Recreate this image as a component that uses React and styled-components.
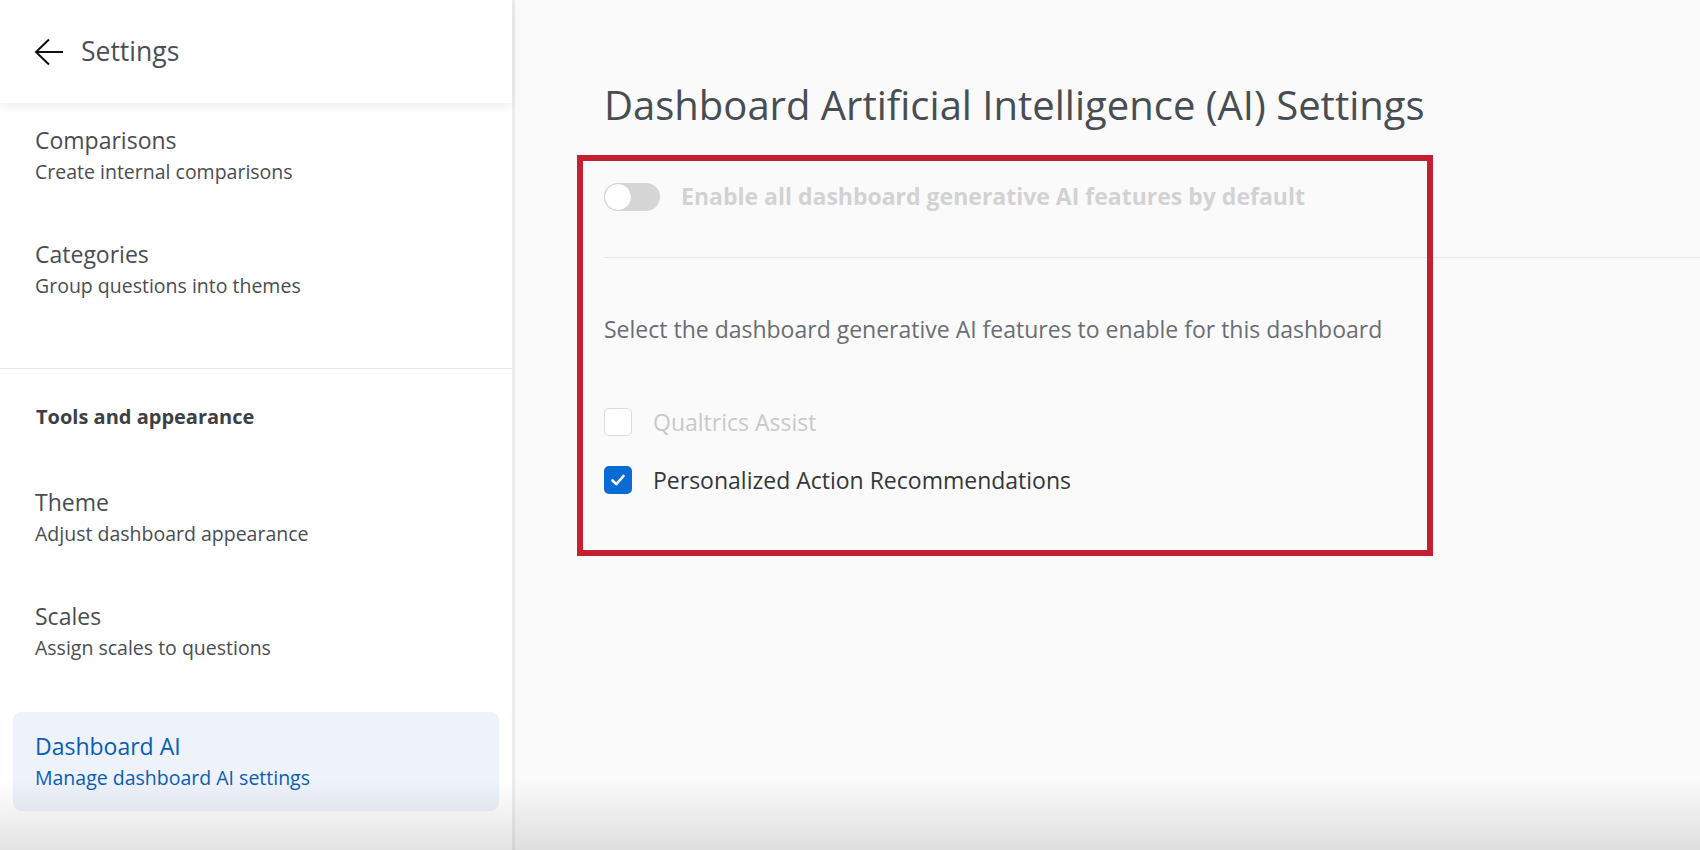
import React from 'react'
import styled, { createGlobalStyle } from 'styled-components'

const GlobalStyle = createGlobalStyle`
    html, body {
        margin: 0;
        padding: 0;
        height: 100%;
    }
    body {
        font-family: "Open Sans", "Noto Sans", sans-serif;
        background: #fafafa;
    }
    #root {
        height: 100%;
    }
`

const navGroups = [
    {
        items: [
            { title: 'Comparisons', sub: 'Create internal comparisons' },
            { title: 'Categories', sub: 'Group questions into themes' },
        ],
    },
    {
        label: 'Tools and appearance',
        items: [
            { title: 'Theme', sub: 'Adjust dashboard appearance' },
            { title: 'Scales', sub: 'Assign scales to questions' },
            { title: 'Dashboard AI', sub: 'Manage dashboard AI settings', active: true },
        ],
    },
]

export default function App() {
    return (
        <>
            <GlobalStyle />
            <Page>
                <Sidebar>
                    <Header>
                        <BackArrow width="30" height="28" viewBox="0 0 30 28">
                            <path d="M29 14H2M15 1.5L2 14l13 12.5" fill="none" stroke="#111" strokeWidth="2" />
                        </BackArrow>
                        <HeaderTitle>Settings</HeaderTitle>
                    </Header>
                    <NavList>
                        {navGroups.map((group, i) => (
                            <NavGroup key={i} $first={i === 0}>
                                {group.label && <GroupLabel>{group.label}</GroupLabel>}
                                {group.items.map((item) => (
                                    <NavItem key={item.title} $active={item.active}>
                                        <NavTitle $active={item.active}>{item.title}</NavTitle>
                                        <NavSub $active={item.active}>{item.sub}</NavSub>
                                    </NavItem>
                                ))}
                            </NavGroup>
                        ))}
                    </NavList>
                </Sidebar>

                <Main>
                    <PageTitle>Dashboard Artificial Intelligence (AI) Settings</PageTitle>
                    <ToggleRow>
                        <Toggle>
                            <Knob />
                        </Toggle>
                        <ToggleLabel>Enable all dashboard generative AI features by default</ToggleLabel>
                    </ToggleRow>
                    <Divider />
                    <Hint>Select the dashboard generative AI features to enable for this dashboard</Hint>
                    <Options>
                        <Option>
                            <Checkbox $disabled />
                            <OptionLabel $disabled>Qualtrics Assist</OptionLabel>
                        </Option>
                        <Option>
                            <Checkbox $checked>
                                <svg width="16" height="14" viewBox="0 0 16 14">
                                    <path d="M2.5 7.5l3.8 3.6L13.5 3" fill="none" stroke="#fff" strokeWidth="2.6" strokeLinecap="round" strokeLinejoin="round" />
                                </svg>
                            </Checkbox>
                            <OptionLabel>Personalized Action Recommendations</OptionLabel>
                        </Option>
                    </Options>
                    <Highlight />
                </Main>
                <BottomShade />
            </Page>
        </>
    )
}

const Page = styled.div`
    position: relative;
    display: flex;
    height: 850px;
    overflow: hidden;
`

const Sidebar = styled.aside`
    width: 512px;
    flex-shrink: 0;
    background: #fff;
    border-right: 3px solid #ededed;
    display: flex;
    flex-direction: column;
`

const Header = styled.div`
    position: relative;
    z-index: 1;
    height: 103px;
    display: flex;
    align-items: center;
    padding-left: 34px;
    background: #fff;
    box-shadow: 0 4px 10px rgba(0, 0, 0, 0.07);
`

const BackArrow = styled.svg`
    margin-right: 17px;
    margin-top: 1px;
`

const HeaderTitle = styled.div`
    font-size: 26.5px;
    color: #4a4f55;
    margin-top: -2px;
`

const NavList = styled.nav`
    display: flex;
    flex-direction: column;
`

const NavGroup = styled.div`
    display: flex;
    flex-direction: column;
    gap: 15px;
    padding: ${(p) => (p.$first ? '3px 0 49px' : '34px 0 0')};
    border-bottom: ${(p) => (p.$first ? '1px solid #e8e8e8' : 'none')};
`

const GroupLabel = styled.div`
    font-size: 20px;
    font-weight: 700;
    line-height: 28px;
    color: #3c4046;
    padding-left: 36px;
    margin-bottom: 22px;
`

const NavItem = styled.div`
    margin: ${(p) => (p.$active ? '16px 13px 0' : '0 13px')};
    padding: 18.5px 22px;
    border-radius: 8px;
    background: ${(p) => (p.$active ? '#edf2fb' : 'transparent')};
`

const NavTitle = styled.div`
    font-size: 23px;
    line-height: 31px;
    color: ${(p) => (p.$active ? '#0b5cb5' : '#484d53')};
`

const NavSub = styled.div`
    font-size: 19.5px;
    line-height: 30px;
    margin-top: 1px;
    color: ${(p) => (p.$active ? '#0b5cb5' : '#484d53')};
`

const Main = styled.main`
    position: relative;
    flex: 1;
    background: #fafafa;
    padding: 81px 0 0 89px;
    display: flex;
    flex-direction: column;
`

const PageTitle = styled.h1`
    margin: 0;
    font-size: 40px;
    font-weight: 400;
    line-height: 48px;
    color: #484d53;
`

const ToggleRow = styled.div`
    display: flex;
    align-items: center;
    gap: 21px;
    margin-top: 53px;
`

const Toggle = styled.div`
    position: relative;
    width: 56px;
    height: 28px;
    border-radius: 14px;
    background: #d6d6d6;
    flex-shrink: 0;
`

const Knob = styled.div`
    position: absolute;
    left: 0;
    top: 0;
    width: 26px;
    height: 26px;
    border-radius: 50%;
    background: #fff;
    border: 1px solid #d0d0d0;
`

const ToggleLabel = styled.div`
    font-size: 23px;
    font-weight: 700;
    line-height: 30px;
    color: #d2d2d2;
    margin-top: -1px;
`

const Divider = styled.div`
    height: 1px;
    background: #e8e8e8;
    margin-top: 46px;
`

const Hint = styled.div`
    font-size: 23px;
    line-height: 32px;
    color: #6a6e74;
    margin-top: 55px;
`

const Options = styled.div`
    display: flex;
    flex-direction: column;
    gap: 28px;
    margin-top: 62px;
`

const Option = styled.div`
    display: flex;
    align-items: center;
    gap: 21px;
`

const Checkbox = styled.div`
    width: 28px;
    height: 28px;
    box-sizing: border-box;
    border-radius: 5px;
    flex-shrink: 0;
    display: flex;
    align-items: center;
    justify-content: center;
    background: ${(p) => (p.$checked ? '#0b6bd4' : '#fff')};
    border: ${(p) => (p.$checked ? 'none' : '1.5px solid #dcdcdc')};
`

const OptionLabel = styled.div`
    font-size: 23px;
    line-height: 30px;
    color: ${(p) => (p.$disabled ? '#c9c9c9' : '#33373c')};
`

const Highlight = styled.div`
    position: absolute;
    left: 62px;
    top: 155px;
    width: 856px;
    height: 401px;
    box-sizing: border-box;
    border: 6px solid #c42032;
    pointer-events: none;
`

const BottomShade = styled.div`
    position: absolute;
    left: 0;
    right: 0;
    bottom: 0;
    height: 70px;
    background: linear-gradient(180deg, rgba(0, 0, 0, 0) 0%, rgba(0, 0, 0, 0.11) 100%);
    pointer-events: none;
`
